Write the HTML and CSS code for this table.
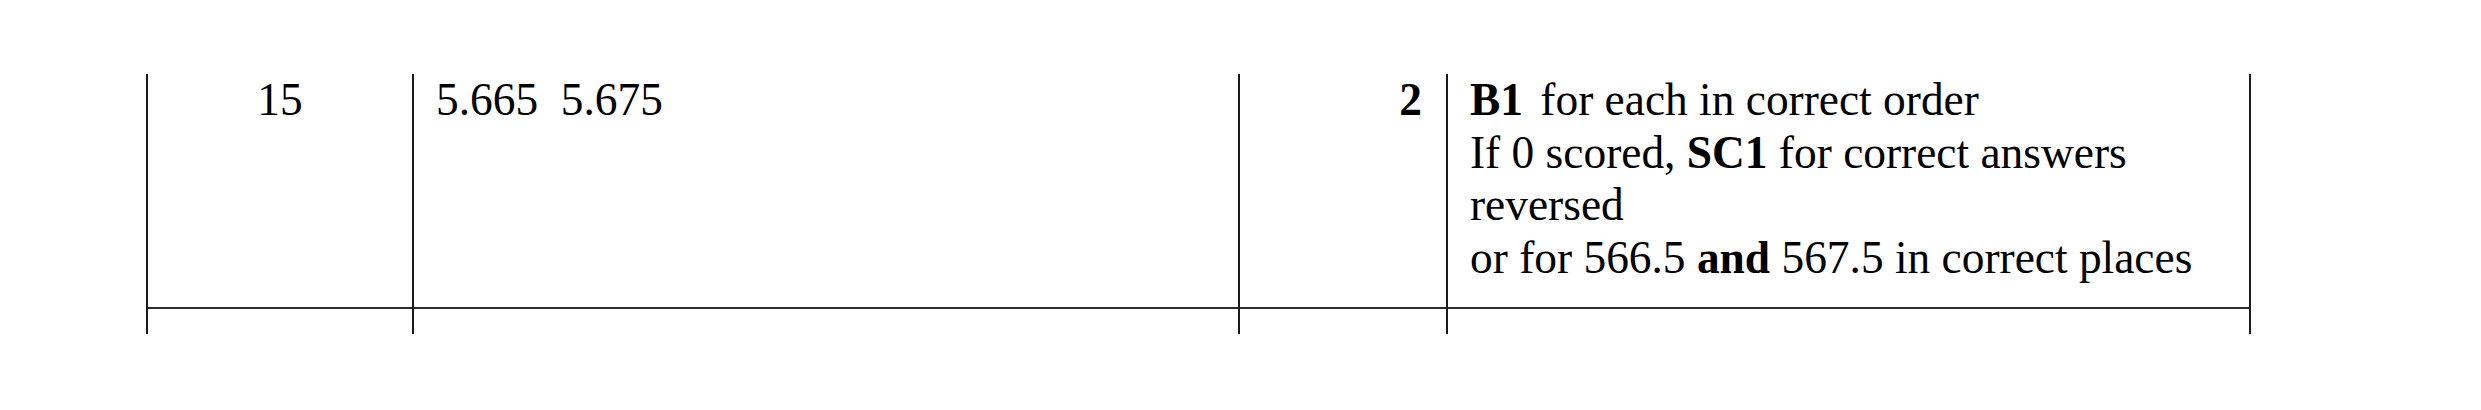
FILE: index.html
```html
<!DOCTYPE html>
<html>
<head>
<meta charset="utf-8">
<link rel="stylesheet" href="styles.css">
</head>
<body>
<div class="table">
  <div class="cell c-num">15</div>
  <div class="cell c-ans">5.665&nbsp; 5.675</div>
  <div class="cell c-mark">2</div>
  <div class="cell c-note c-last">
    <div><b class="lead">B1</b> for each in correct order</div>
    <div>If 0 scored, <b>SC1</b> for correct answers reversed</div>
    <div>or for 566.5 <b>and</b> 567.5 in correct places</div>
  </div>
  <div class="cell stub"></div>
  <div class="cell stub"></div>
  <div class="cell stub"></div>
  <div class="cell stub c-last"></div>
</div>
</body>
</html>
```

FILE: styles.css
```css
html, body {
  margin: 0;
  padding: 0;
  background: #ffffff;
}
body {
  font-family: "Liberation Serif", "Times New Roman", serif;
  font-size: 45.4px;
  line-height: 52.5px;
  color: #000000;
}
.table {
  display: grid;
  grid-template-columns: 266px 826px 208px 805px;
  grid-template-rows: 235px 25px;
  margin: 74px 0 0 146px;
  width: max-content;
}
.cell {
  box-sizing: border-box;
  border-left: 2px solid #1a1a1a;
}
.c-last {
  border-right: 2px solid #1a1a1a;
}
.c-num, .c-ans, .c-mark, .c-note {
  border-bottom: 2px solid #2a2a2a;
}
.c-num {
  text-align: center;
}
.c-ans {
  padding-left: 22px;
}
.c-mark {
  text-align: right;
  font-weight: bold;
  padding-right: 24px;
}
.c-note {
  padding-left: 22px;
  padding-right: 40px;
}
.c-note b {
  font-weight: bold;
}
.c-note .lead {
  margin-right: 6px;
}
```
